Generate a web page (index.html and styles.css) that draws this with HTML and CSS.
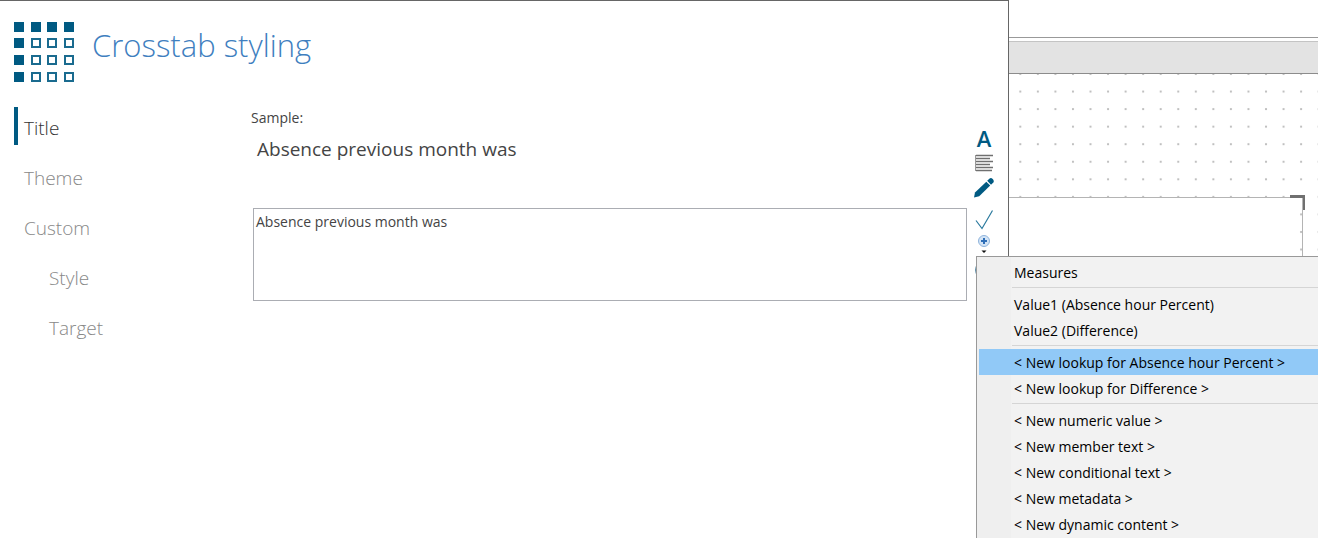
FILE: index.html
```html
<!DOCTYPE html>
<html lang="en">
<head>
    <meta charset="UTF-8">
    <meta name="viewport" content="width=device-width, initial-scale=1.0">
    <title>Crosstab styling</title>
    <link rel="stylesheet" href="styles.css">
</head>
<body>
    <div class="app">
        <main class="dialog">
            <header class="dialog-header">
                <svg class="logo" viewBox="0 0 60 60" aria-hidden="true">
                    <g fill="#005a82">
                        <rect x="0" y="0" width="10" height="10"/>
                        <rect x="17" y="0" width="10" height="10"/>
                        <rect x="33" y="0" width="10" height="10"/>
                        <rect x="50" y="0" width="10" height="10"/>
                        <rect x="0" y="16" width="10" height="10"/>
                        <rect x="0" y="33" width="10" height="10"/>
                        <rect x="0" y="50" width="10" height="10"/>
                    </g>
                    <g fill="none" stroke="#1a6b8f" stroke-width="2">
                        <rect x="18" y="17" width="8" height="8"/>
                        <rect x="34" y="17" width="8" height="8"/>
                        <rect x="51" y="17" width="8" height="8"/>
                        <rect x="18" y="34" width="8" height="8"/>
                        <rect x="34" y="34" width="8" height="8"/>
                        <rect x="51" y="34" width="8" height="8"/>
                        <rect x="18" y="51" width="8" height="8"/>
                        <rect x="34" y="51" width="8" height="8"/>
                        <rect x="51" y="51" width="8" height="8"/>
                    </g>
                </svg>
                <h1>Crosstab styling</h1>
            </header>
            <div class="dialog-body">
                <nav class="side-nav">
                    <a href="#title" class="active">Title</a>
                    <a href="#theme">Theme</a>
                    <a href="#custom">Custom</a>
                    <a href="#style" class="sub">Style</a>
                    <a href="#target" class="sub">Target</a>
                </nav>
                <section class="editor">
                    <label for="titleText">Sample:</label>
                    <p class="sample">Absence previous month was</p>
                    <textarea id="titleText" spellcheck="false">Absence previous month was</textarea>
                </section>
                <div class="tools">
                    <button type="button" class="tool font-tool" title="Font">A</button>
                    <button type="button" class="tool" title="Alignment">
                        <svg viewBox="0 0 20 20">
                            <path d="M1.500 2v16" stroke="#999" fill="none"/>
                            <path d="M2 2.500h17M2 5.500h14M2 8.500h17M2 11.500h14M2 14.500h17M2 17.500h16" stroke="#707070" stroke-width="1.500" fill="none"/>
                        </svg>
                    </button>
                    <button type="button" class="tool" title="Edit">
                        <svg viewBox="0 0 20 20" fill="#005a82">
                            <path d="M0 19.500 1 14.500 12.300 3.700 16.200 7.600 5.200 18.300z"/>
                            <path d="M13.200 2.800 15.600 .6Q17-.6 18.700 1T19.400 4.500L17 6.800z"/>
                        </svg>
                    </button>
                    <button type="button" class="tool apply" title="Apply">
                        <svg viewBox="0 0 20 20">
                            <path d="M2 10.500 8 18.500 18.500 .5" stroke="#2b7a9e" stroke-width="1.200" fill="none"/>
                        </svg>
                    </button>
                    <div class="insert">
                        <button type="button" class="tool insert-tool" title="Insert">
                            <svg viewBox="0 0 20 21">
                                <circle cx="10" cy="6" r="5.500" fill="#d3e4f6" stroke="#8fb4dc"/>
                                <path d="M10 3v6M7 6h6" stroke="#2f6fb8" stroke-width="2"/>
                                <path d="M7.500 15.500h5L10 18z" fill="#111"/>
                            </svg>
                        </button>
                        <div class="menu" role="menu">
                            <button type="button" role="menuitem">Measures</button>
                            <hr>
                            <button type="button" role="menuitem">Value1 (Absence hour Percent)</button>
                            <button type="button" role="menuitem">Value2 (Difference)</button>
                            <hr>
                            <button type="button" role="menuitem" class="selected">&lt; New lookup for Absence hour Percent &gt;</button>
                            <button type="button" role="menuitem">&lt; New lookup for Difference &gt;</button>
                            <hr>
                            <button type="button" role="menuitem">&lt; New numeric value &gt;</button>
                            <button type="button" role="menuitem">&lt; New member text &gt;</button>
                            <button type="button" role="menuitem">&lt; New conditional text &gt;</button>
                            <button type="button" role="menuitem">&lt; New metadata &gt;</button>
                            <button type="button" role="menuitem">&lt; New dynamic content &gt;</button>
                        </div>
                    </div>
                    <button type="button" class="tool" title="Help">
                        <svg viewBox="0 0 20 20">
                            <circle cx="10" cy="9" r="8.500" fill="none" stroke="#5b8ba5"/>
                        </svg>
                    </button>
                </div>
            </div>
        </main>
        <aside class="workspace">
            <div class="ribbon"></div>
            <div class="canvas">
                <svg class="dots" aria-hidden="true">
                    <defs>
                        <pattern id="grid" x="2.530" y="-8.780" width="17.550" height="17.550" patternUnits="userSpaceOnUse">
                            <rect x="7.780" y="7.780" width="2" height="2" fill="#c0c0c0"/>
                        </pattern>
                    </defs>
                    <rect width="100%" height="100%" fill="url(#grid)"/>
                </svg>
                <div class="report">
                    <span class="handle"></span>
                </div>
            </div>
        </aside>
    </div>
</body>
</html>
```
FILE: styles.css
```css
* {
    box-sizing: border-box;
}
body {
    margin: 0;
    font-family: "Open Sans", "Noto Sans", sans-serif;
    font-size: 14px;
    color: #444;
    background: #fff;
    overflow: hidden;
}
.app {
    display: grid;
    grid-template-columns: minmax(0, 1fr) 309px;
    height: 100vh;
}

/* dialog */
.dialog {
    position: relative;
    z-index: 1;
    border-top: 1px solid #666;
    border-right: 1px solid #666;
    padding: 21px 14px 0 14px;
    background: #fff;
}
.dialog-header {
    display: flex;
    gap: 18px;
    margin-bottom: 25px;
}
.logo {
    width: 60px;
    height: 60px;
}
h1 {
    margin: 0;
    font-size: 31px;
    font-weight: 300;
    line-height: 46px;
    color: #3f7fbf;
}
.dialog-body {
    display: grid;
    grid-template-columns: 237px minmax(0, 1fr) 20px;
}
.side-nav {
    display: flex;
    flex-direction: column;
    gap: 12px;
}
.side-nav a {
    padding: 4px 0 0 6px;
    border-left: 4px solid transparent;
    font-size: 19px;
    font-weight: 300;
    line-height: 34px;
    color: #888;
    text-decoration: none;
}
.side-nav .active {
    border-color: #005a82;
    color: #333;
}
.side-nav .sub {
    padding-left: 31px;
}

/* text editor */
.editor {
    display: flex;
    flex-direction: column;
    padding-right: 7px;
}
.editor label {
    line-height: 22px;
}
.sample {
    margin: 6px 0 45px 6px;
    font-size: 19px;
    line-height: 28px;
}
textarea {
    height: 93px;
    margin-left: 2px;
    padding: 2px;
    border: 1px solid #abadb3;
    outline: none;
    resize: none;
    font: inherit;
    line-height: 22px;
    color: inherit;
    background: #fff;
}

/* icon column */
.tools {
    display: flex;
    flex-direction: column;
    gap: 5px;
    padding-top: 21px;
}
.tool {
    display: block;
    width: 20px;
    height: 20px;
    padding: 0;
    border: none;
    background: none;
}
.tool svg {
    display: block;
    width: 100%;
    height: 100%;
}
.font-tool {
    font: 600 22px/20px "Open Sans", sans-serif;
    color: #005a82;
}
.apply {
    margin-top: 7px;
}
.insert {
    position: relative;
}
.insert-tool {
    height: 21px;
}

/* drop-down menu */
.menu {
    position: absolute;
    top: 100%;
    left: 2px;
    z-index: 2;
    width: 380px;
    padding: 2px;
    border: 1px solid #999;
    background: linear-gradient(to right, #efefef 34px, #f2f2f2 34px);
}
.menu button {
    display: block;
    width: 100%;
    height: 26px;
    padding: 2px 0 0 35px;
    border: none;
    background: none;
    font: inherit;
    line-height: 24px;
    text-align: left;
    white-space: nowrap;
    color: #000;
}
.menu .selected {
    background: #91c9f7;
}
.menu hr {
    height: 1px;
    margin: 2px 0 3px 33px;
    border: none;
    background: #d5d5d5;
}

/* design surface behind the dialog */
.workspace {
    display: flex;
    flex-direction: column;
    padding-top: 37px;
}
.ribbon {
    height: 37px;
    border-top: 1px solid #999;
    border-bottom: 1px solid #8c8c8c;
    background: linear-gradient(#fff 3px, #c4c4c4 3px, #c4c4c4 4px, #e3e3e3 4px);
}
.canvas {
    position: relative;
    flex: 1;
    padding: 123px 15px 0 0;
}
.dots {
    position: absolute;
    inset: 0;
    width: 100%;
    height: 100%;
}
.report {
    position: relative;
    height: 100%;
    padding-right: 4px;
    border-top: 1px solid #b4b4b4;
    border-right: 1px solid #b4b4b4;
    background: #fff content-box;
}
.handle {
    position: absolute;
    top: -3px;
    right: -3px;
    width: 15px;
    height: 15px;
    border-top: 3px solid #707070;
    border-right: 2px solid #707070;
}
```
